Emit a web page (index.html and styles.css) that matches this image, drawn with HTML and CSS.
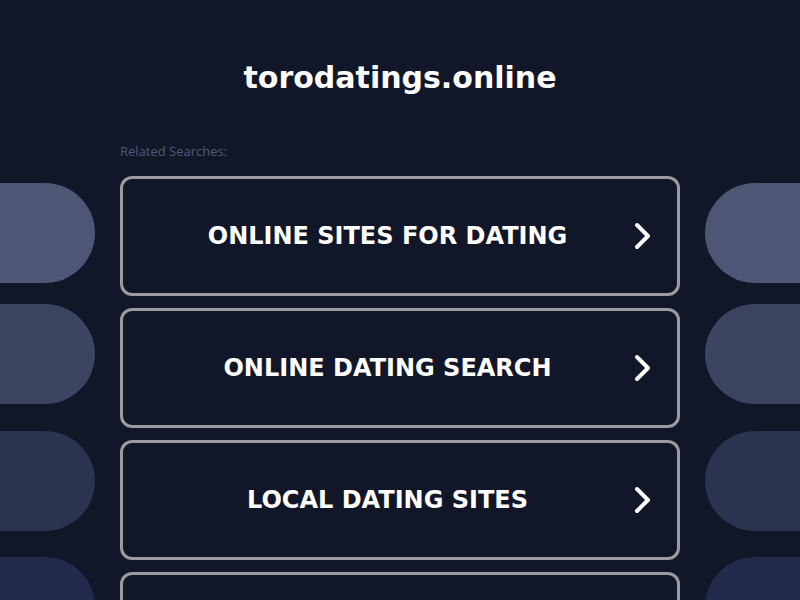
FILE: index.html
```html
<!DOCTYPE html>
<html lang="en">
<head>
<meta charset="utf-8">
<title>torodatings.online</title>
<link rel="stylesheet" href="styles.css">
</head>
<body>
<header class="header">
  <h1 class="title">torodatings.online</h1>
</header>
<div class="layout">
  <aside class="side side-left">
    <div class="pill pill-1"></div>
    <div class="pill pill-2"></div>
    <div class="pill pill-3"></div>
    <div class="pill pill-4"></div>
  </aside>
  <main class="main">
    <p class="related">Related Searches:</p>
    <a class="result" href="#"><span class="result-text">ONLINE SITES FOR DATING</span><svg class="chev" viewBox="0 0 20 30" width="20" height="30"><path d="M5 4 L16 15 L5 26" fill="none" stroke="#fff" stroke-width="4" stroke-linecap="round" stroke-linejoin="round"/></svg></a>
    <a class="result" href="#"><span class="result-text">ONLINE DATING SEARCH</span><svg class="chev" viewBox="0 0 20 30" width="20" height="30"><path d="M5 4 L16 15 L5 26" fill="none" stroke="#fff" stroke-width="4" stroke-linecap="round" stroke-linejoin="round"/></svg></a>
    <a class="result" href="#"><span class="result-text">LOCAL DATING SITES</span><svg class="chev" viewBox="0 0 20 30" width="20" height="30"><path d="M5 4 L16 15 L5 26" fill="none" stroke="#fff" stroke-width="4" stroke-linecap="round" stroke-linejoin="round"/></svg></a>
    <a class="result" href="#"><span class="result-text">FREE DATING APPS</span><svg class="chev" viewBox="0 0 20 30" width="20" height="30"><path d="M5 4 L16 15 L5 26" fill="none" stroke="#fff" stroke-width="4" stroke-linecap="round" stroke-linejoin="round"/></svg></a>
  </main>
  <aside class="side side-right">
    <div class="pill pill-1"></div>
    <div class="pill pill-2"></div>
    <div class="pill pill-3"></div>
    <div class="pill pill-4"></div>
  </aside>
</div>
</body>
</html>
```
FILE: styles.css
```css
html, body {
  margin: 0;
  padding: 0;
  background: #111729;
  height: 100%;
  overflow: hidden;
}
body {
  font-family: "DejaVu Sans", sans-serif;
  color: #fff;
}
.header {
  padding-top: 61px;
  text-align: center;
}
.title {
  margin: 0;
  font-size: 30px;
  line-height: 34px;
  font-weight: bold;
  color: #fff;
}
.layout {
  display: flex;
  align-items: flex-start;
  margin-top: 48px;
}
.side {
  width: 95px;
  flex: none;
  display: flex;
  flex-direction: column;
  padding-top: 40px;
}
.main {
  width: 560px;
  flex: none;
  margin: 0 25px;
  display: flex;
  flex-direction: column;
  gap: 12px;
}
.pill {
  height: 100px;
  flex: none;
}
.side-left .pill { border-radius: 0 50px 50px 0; }
.side-right .pill { border-radius: 50px 0 0 50px; }
.pill-1 { background: #4d5674; }
.pill-2 { background: #3b4461; margin-top: 21px; }
.pill-3 { background: #2a3350; margin-top: 27px; }
.pill-4 { background: #212a4a; margin-top: 26px; }
.related {
  margin: 0 0 5px;
  font-family: "Open Sans", sans-serif;
  font-size: 13px;
  line-height: 16px;
  color: #525a7a;
}
.result {
  display: flex;
  align-items: center;
  box-sizing: border-box;
  height: 120px;
  border: 3px solid #9b9ba0;
  border-radius: 12px;
  padding: 0 25px 0 40px;
  text-decoration: none;
  color: #fff;
  background: #111729;
}
.result-text {
  flex: 1;
  text-align: center;
  font-size: 24px;
  font-weight: bold;
  margin-right: 20px;
}
.chev {
  flex: none;
  display: block;
}
```
